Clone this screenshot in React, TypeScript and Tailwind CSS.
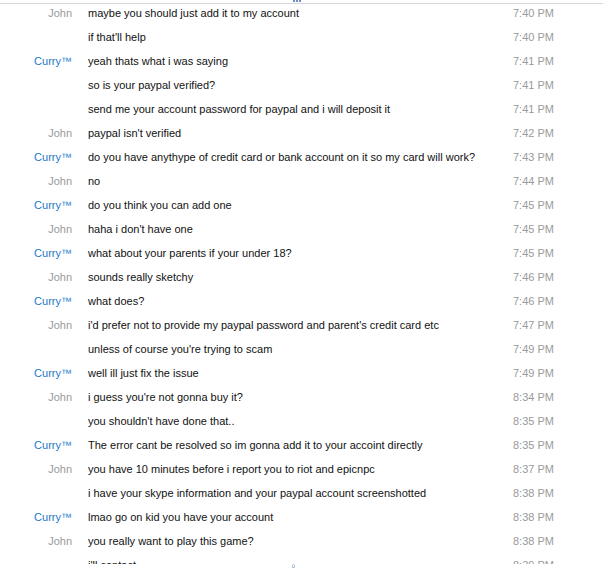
import React from "react";

type Row = { name?: "John" | "Curry™"; text: string; time: string };

const rows: Row[] = [
  { name: "John", text: "maybe you should just add it to my account", time: "7:40 PM" },
  { text: "if that'll help", time: "7:40 PM" },
  { name: "Curry™", text: "yeah thats what i was saying", time: "7:41 PM" },
  { text: "so is your paypal verified?", time: "7:41 PM" },
  { text: "send me your account password for paypal and i will deposit it", time: "7:41 PM" },
  { name: "John", text: "paypal isn't verified", time: "7:42 PM" },
  { name: "Curry™", text: "do you have anythype of credit card or bank account on it so my card will work?", time: "7:43 PM" },
  { name: "John", text: "no", time: "7:44 PM" },
  { name: "Curry™", text: "do you think you can add one", time: "7:45 PM" },
  { name: "John", text: "haha i don't have one", time: "7:45 PM" },
  { name: "Curry™", text: "what about your parents if your under 18?", time: "7:45 PM" },
  { name: "John", text: "sounds really sketchy", time: "7:46 PM" },
  { name: "Curry™", text: "what does?", time: "7:46 PM" },
  { name: "John", text: "i'd prefer not to provide my paypal password and parent's credit card etc", time: "7:47 PM" },
  { text: "unless of course you're trying to scam", time: "7:49 PM" },
  { name: "Curry™", text: "well ill just fix the issue", time: "7:49 PM" },
  { name: "John", text: "i guess you're not gonna buy it?", time: "8:34 PM" },
  { text: "you shouldn't have done that..", time: "8:35 PM" },
  { name: "Curry™", text: "The error cant be resolved so im gonna add it to your accoint directly", time: "8:35 PM" },
  { name: "John", text: "you have 10 minutes before i report you to riot and epicnpc", time: "8:37 PM" },
  { text: "i have your skype information and your paypal account screenshotted", time: "8:38 PM" },
  { name: "Curry™", text: "lmao go on kid you have your account", time: "8:38 PM" },
  { name: "John", text: "you really want to play this game?", time: "8:38 PM" },
  { text: "i'll contact", time: "8:39 PM" },
];

export default function App() {
  return (
    <div
      className="relative w-[605px] h-[568px] overflow-hidden bg-white text-[11px]"
      style={{ fontFamily: '"Liberation Sans", Arial, sans-serif' }}
    >
      <div className="h-[564px] overflow-hidden">
        <div className="flex flex-col pt-px">
          {rows.map((r, i) => (
            <div key={i} className="flex h-[24px] items-center leading-[24px]">
              <div
                className={
                  "w-[72px] shrink-0 text-right " +
                  (r.name === "John" ? "text-[#9a9a9a]" : "text-[#1a7ac6]")
                }
              >
                {r.name ?? ""}
              </div>
              <div className="ml-[16px] w-[425px] shrink-0 whitespace-nowrap text-[#111]">{r.text}</div>
              <div className="whitespace-nowrap text-[#9a9a9a]">{r.time}</div>
            </div>
          ))}
        </div>
      </div>
      <div className="absolute left-0 top-[3px] w-[603px] h-px bg-[#d3d8de]" />
      <div className="absolute left-[293px] top-0 flex gap-px">
        <div className="w-[2px] h-[2px] bg-[#6d8fc0]" />
        <div className="w-[2px] h-[2px] bg-[#6d8fc0]" />
        <div className="w-[2px] h-[2px] bg-[#6d8fc0]" />
      </div>
      <div className="absolute left-[292px] top-[564px] w-[3px] h-[4px] border border-[#a9bfd6] rounded-t-sm" />
    </div>
  );
}
